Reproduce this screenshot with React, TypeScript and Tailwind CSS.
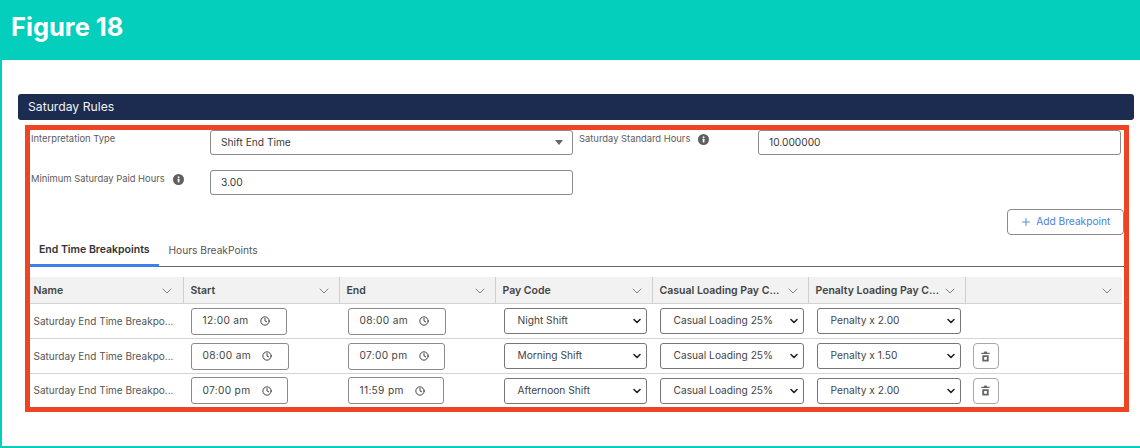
import { ChevronDown, Clock, Plus } from 'lucide-react';

const FONT = 'font-["Inter","Liberation_Sans",sans-serif]';

const COLS = [
  { label: 'Name', w: 'w-[153.5px]', pr: 'pr-[8px]' },
  { label: 'Start', w: 'w-[156px]', pr: 'pr-[7px]' },
  { label: 'End', w: 'w-[156px]', pr: 'pr-[7px]' },
  { label: 'Pay Code', w: 'w-[157px]', pr: 'pr-[7px]' },
  { label: 'Casual Loading Pay C...', w: 'w-[156px]', pr: 'pr-[7px]' },
  { label: 'Penalty Loading Pay C...', w: 'w-[157px]', pr: 'pr-[7px]' },
  { label: '', w: 'flex-1', pr: 'pr-[7px]' },
];

const ROWS = [
  { start: '12:00 am', startW: 'w-[96px]', end: '08:00 am', endW: 'w-[98px]', pay: 'Night Shift', penalty: 'Penalty x 2.00', del: false, h: 'h-[35px]', last: false },
  { start: '08:00 am', startW: 'w-[98px]', end: '07:00 pm', endW: 'w-[97px]', pay: 'Morning Shift', penalty: 'Penalty x 1.50', del: true, h: 'h-[35px]', last: false },
  { start: '07:00 pm', startW: 'w-[97px]', end: '11:59 pm', endW: 'w-[96px]', pay: 'Afternoon Shift', penalty: 'Penalty x 2.00', del: true, h: 'h-[33px]', last: true },
];

function InfoDot() {
  return (
    <svg width="11" height="11" viewBox="0 0 22 22" className="shrink-0">
      <circle cx="11" cy="11" r="11" fill="#5f5f5f" />
      <rect x="9.5" y="9.5" width="3.4" height="7.5" rx="0.8" fill="#fff" />
      <circle cx="11.2" cy="6.4" r="1.9" fill="#fff" />
    </svg>
  );
}

function TrashIcon() {
  return (
    <svg width="11" height="11" viewBox="0 0 24 24" fill="#666">
      <path d="M9.5 1h5l1 3H21v2.6H3V4h5.5z" />
      <path fillRule="evenodd" d="M5 9h14v14H5zM9 13v6h6v-6z" />
    </svg>
  );
}

function Label({ text, info }: { text: string; info?: boolean }) {
  return (
    <div className="flex items-center gap-[8px] text-[9.4px] leading-[12px] text-[#5c5c5c]">
      <span>{text}</span>
      {info && <InfoDot />}
    </div>
  );
}

function TimeField({ value, w }: { value: string; w: string }) {
  return (
    <div className={`${w} h-[27px] flex items-center pl-[11px] bg-white border border-[#8a8a8a] rounded-[3px] text-[10.2px] tracking-[0.3px] text-[#444]`}>
      <span>{value}</span>
      <Clock size={10} strokeWidth={2.2} className="ml-[11.5px] text-[#333]" />
    </div>
  );
}

function Dropdown({ value, w, ml }: { value: string; w: string; ml: string }) {
  return (
    <div className={`${w} ${ml} h-[26px] flex items-center justify-between pl-[13px] pr-[3px] bg-white border border-[#767676] rounded-[3px] text-[10.2px] text-[#444]`}>
      <span>{value}</span>
      <ChevronDown size={12} strokeWidth={3.2} className="text-[#222]" />
    </div>
  );
}

function TableRow({ row }: { row: (typeof ROWS)[number] }) {
  return (
    <div className={`${row.h} flex items-center ${row.last ? '' : 'border-b border-[#d4d4d4]'}`}>
      <div className="w-[160.5px] pl-[3.5px] text-[10px] text-[#555] whitespace-nowrap">Saturday End Time Breakpo...</div>
      <div className="w-[157px]">
        <TimeField value={row.start} w={row.startW} />
      </div>
      <div className="w-[156px]">
        <TimeField value={row.end} w={row.endW} />
      </div>
      <Dropdown value={row.pay} w="w-[143px]" ml="" />
      <Dropdown value="Casual Loading 25%" w="w-[144px]" ml="ml-[13px]" />
      <Dropdown value={row.penalty} w="w-[144px]" ml="ml-[13px]" />
      {row.del && (
        <button className="ml-[12px] w-[26px] h-[26px] flex items-center justify-center border border-[#a8a8a8] rounded-[4px] bg-white">
          <TrashIcon />
        </button>
      )}
    </div>
  );
}

export default function App() {
  return (
    <div className={`${FONT} w-[1140px] h-[448px] flex flex-col bg-white overflow-hidden`}>
      <header className="h-[60px] shrink-0 bg-[#03cfbc] pl-[11px] pt-[11px]">
        <h1 className="text-[25.5px] leading-[32px] font-bold text-white">Figure 18</h1>
      </header>

      <main className="flex-1 flex flex-col border-l-2 border-b-2 border-[#03cfbc] pt-[34px] pl-[16px] pr-[6.5px]">
        <div className="h-[26px] flex items-center pl-[10px] bg-[#1c2b50] rounded-[3px] text-[12.2px] text-[#f2f2f2]">Saturday Rules</div>

        <section className="mt-[5px] ml-[7px] mr-[4.5px] h-[287px] border-[5px] border-[#ee4423] flex flex-col text-[#3a3a3a]">
          <div className="flex pr-[3px]">
            <div className="w-[180px] pl-[1px] pt-[3px]">
              <Label text="Interpretation Type" />
            </div>
            <div className="w-[363px] h-[25px] flex items-center justify-between pl-[10px] pr-[9px] border border-[#8a8a8a] rounded-[3px] text-[10.2px]">
              <span>Shift End Time</span>
              <span className="w-0 h-0 border-x-[4px] border-x-transparent border-t-[5px] border-t-[#666]" />
            </div>
            <div className="w-[185px] pl-[6px] pt-[3px]">
              <Label text="Saturday Standard Hours" info />
            </div>
            <div className="flex-1 h-[25px] flex items-center pl-[10px] border border-[#8a8a8a] rounded-[3px] text-[10.2px]">10.000000</div>
          </div>

          <div className="flex mt-[15px]">
            <div className="w-[180px] pl-[1px] pt-[3px]">
              <Label text="Minimum Saturday Paid Hours" info />
            </div>
            <div className="w-[363px] h-[25px] flex items-center pl-[10px] border border-[#8a8a8a] rounded-[3px] text-[10.2px]">3.00</div>
          </div>

          <div className="flex justify-end mt-[14px]">
            <button className="w-[117.5px] h-[26px] flex items-center justify-center gap-[4px] border border-[#8a8a8a] rounded-[4px] text-[10.2px] text-[#4a7fd8]">
              <Plus size={12} strokeWidth={1.8} />
              Add Breakpoint
            </button>
          </div>

          <div className="h-[32px] flex items-stretch border-b border-[#666]">
            <div className="w-[128.5px] flex items-center justify-center border-b-[3px] border-[#3f7fe8] -mb-px text-[10.5px] font-semibold text-[#333]">End Time Breakpoints</div>
            <div className="pl-[10px] flex items-center text-[10.2px] text-[#555]">Hours BreakPoints</div>
          </div>

          <div className="mt-[10px] h-[27px] flex bg-[#f2f2f2] border-b border-[#d4d4d4] mr-[2px]">
            {COLS.map(c => (
              <div key={c.label || 'actions'} className={`${c.w} ${c.pr} pt-px flex items-center justify-between first:pl-[3.5px] not-first:pl-[7px] not-last:border-r border-[#cfcfcf] text-[10.5px] font-semibold text-[#444] whitespace-nowrap`}>
                <span>{c.label}</span>
                <ChevronDown size={16} strokeWidth={1.2} className="text-[#666] shrink-0" />
              </div>
            ))}
          </div>

          {ROWS.map(r => (
            <TableRow key={r.start} row={r} />
          ))}
        </section>
      </main>
    </div>
  );
}
